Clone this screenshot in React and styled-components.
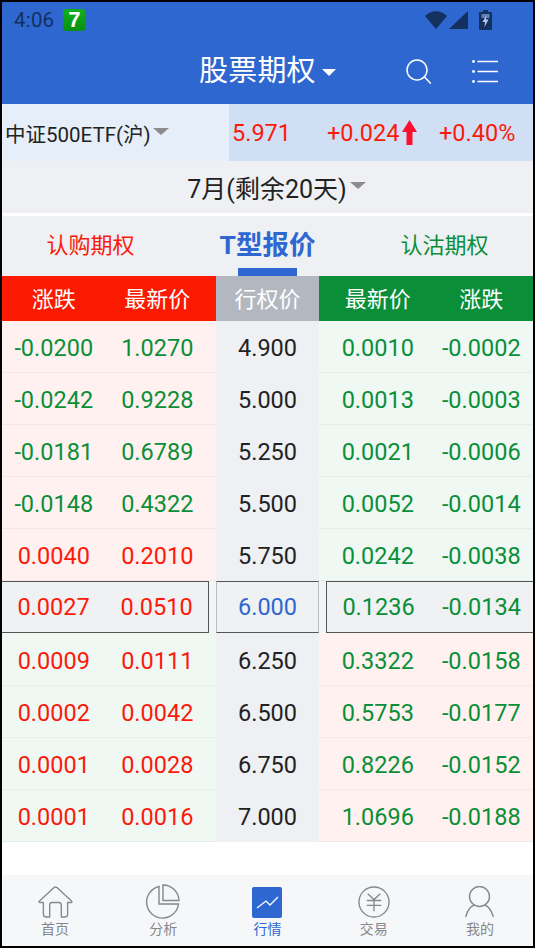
import React from 'react';
import styled, { createGlobalStyle } from 'styled-components';

const Global = createGlobalStyle`
  html, body { margin: 0; padding: 0; background: #000; }
  * { box-sizing: border-box; }
  body { font-family: Roboto, "Noto Sans CJK SC", sans-serif; }
`;
const RED = '#fb1a0a';
const GREEN = '#0a8f38';
const BLUE = '#2e67d0';

const Frame = styled.div`
  width: 535px; height: 948px; padding: 2px; background: #000;
`;
const Screen = styled.div`
  width: 531px; height: 944px; background: #fff; display: flex; flex-direction: column; overflow: hidden;
`;
const Top = styled.div`
  height: 102px; background: ${BLUE}; display: flex; flex-direction: column; flex: none;
`;
const Status = styled.div`
  height: 36px; display: flex; align-items: center; padding: 0 41px 0 12px; color: #14305f; font-size: 20.5px;
`;
const Time = styled.span`
  letter-spacing: 0.2px;
`;
const Badge = styled.div`
  width: 22px; height: 22px; margin-left: 9px; border-radius: 3px; background: linear-gradient(#12b01c, #078f10); color: #fff;
  font: 900 22px/22px "Liberation Sans", sans-serif; text-align: center;
`;
const StatusIcons = styled.div`
  margin-left: auto; display: flex; align-items: center; gap: 2px;
`;
const Title = styled.div`
  flex: 1; display: flex; align-items: center; padding-left: 197px; color: #fff;
`;
const TitleText = styled.span`
  font-size: 29px; line-height: 40px; font-weight: 400; letter-spacing: 0.2px;
`;
const Caret = styled.i`
  display: block; flex: none; width: 0; height: 0;
  border-left: ${p => p.$s}px solid transparent; border-right: ${p => p.$s}px solid transparent;
  border-top: ${p => p.$h}px solid ${p => p.$c};
  margin-left: ${p => p.$m}px; margin-top: ${p => p.$t || 0}px;
`;
const HeaderIcons = styled.div`
  margin-left: auto; display: flex; align-items: center; gap: 41px; padding-right: 35px;
`;
const Info = styled.div`
  height: 57px; display: flex; flex: none; background: #d0dff3; font-size: 23.5px;
`;
const Under = styled.div`
  width: 227px; background: #e6eefa; display: flex; align-items: center; padding-left: 3px; color: #222;
  font-size: 20.5px;
`;
const Quote = styled.div`
  flex: 1; display: flex; align-items: center; color: ${RED}; padding: 1px 0 0 3px; position: relative;
`;
const QuoteVal = styled.span`
  width: ${p => p.$w}px; flex: none;
`;
const Month = styled.div`
  height: 52px; background: #eef0f3; display: flex; align-items: center; justify-content: center; flex: none;
  font-size: 25px; color: #222; padding-left: 18px; padding-bottom: 1px;
`;
const Tabs = styled.div`
  margin-top: 3px; height: 60px; background: #eef0f3; display: grid; grid-template-columns: 177px 177px 177px; flex: none;
`;
const Tab = styled.div`
  display: flex; align-items: center; justify-content: center; position: relative; padding-bottom: 7px;
  color: ${p => p.$c}; font-size: ${p => p.$active ? 26.5 : 22}px; font-weight: ${p => p.$active ? 700 : 400};
`;
const Underline = styled.i`
  position: absolute; left: 59px; bottom: 0; width: 59px; height: 8px; background: ${BLUE};
`;
const Grid = styled.div`
  display: grid; grid-template-columns: 103.5px 110.5px 103px 110.5px 103.5px; flex: none; background: #f3f4f6;
`;
const Head = styled.div`
  height: 45px; background: ${p => p.$bg}; color: #fff; display: flex; align-items: center; justify-content: center;
  font-size: 22px; padding: 0 ${p => p.$pr || 0}px 3px ${p => p.$pl || 0}px;
`;
const Cell = styled.div`
  height: 52.1px; display: flex; align-items: center; justify-content: center; font-size: 23.5px;
  background: ${p => p.$bg}; color: ${p => p.$c};
  padding: 3px ${p => p.$pr || 0}px 0 ${p => p.$pl || 0}px;
  border-bottom: 1px solid ${p => p.$mid ? 'transparent' : 'rgba(0,0,0,0.04)'};
`;
const Sel = styled.div`
  height: 52px; grid-column: ${p => p.$col}; display: grid; grid-template-columns: ${p => p.$cols};
  background: #eff1f3; align-items: center; justify-items: center; font-size: 23.5px; color: ${p => p.$c};
  margin: 0 ${p => p.$mr || 0}px 0 ${p => p.$ml || 0}px;
  border-top: 1px solid #555; border-bottom: 1px solid #555;
  border-left: ${p => p.$l ? `1px solid ${p.$side}` : 'none'}; border-right: ${p => p.$r ? `1px solid ${p.$side}` : 'none'};
`;
const Spacer = styled.div`
  flex: 1; background: #fff;
`;
const Nav = styled.div`
  height: 71px; background: #f6f7f9; display: grid; grid-template-columns: repeat(5, 1fr); flex: none;
`;
const NavItem = styled.div`
  display: flex; flex-direction: column; align-items: center; padding: 10px 0 0 ${p => p.$pl || 0}px;
  color: ${p => p.$c}; font-size: 14px; line-height: 16px;
`;
const NavIcon = styled.div`
  height: 34px; display: flex; align-items: center; justify-content: center; margin-bottom: 2px;
`;

const PINK = '#fff1ef';
const MINT = '#f0f8f4';
const MID = '#eef0f3';

const rows = [
  ['-0.0200','1.0270','4.900','0.0010','-0.0002',GREEN,GREEN,PINK,MINT],
  ['-0.0242','0.9228','5.000','0.0013','-0.0003',GREEN,GREEN,PINK,MINT],
  ['-0.0181','0.6789','5.250','0.0021','-0.0006',GREEN,GREEN,PINK,MINT],
  ['-0.0148','0.4322','5.500','0.0052','-0.0014',GREEN,GREEN,PINK,MINT],
  ['0.0040','0.2010','5.750','0.0242','-0.0038',RED,GREEN,PINK,MINT],
  null,
  ['0.0009','0.0111','6.250','0.3322','-0.0158',RED,GREEN,MINT,PINK],
  ['0.0002','0.0042','6.500','0.5753','-0.0177',RED,GREEN,MINT,PINK],
  ['0.0001','0.0028','6.750','0.8226','-0.0152',RED,GREEN,MINT,PINK],
  ['0.0001','0.0016','7.000','1.0696','-0.0188',RED,GREEN,MINT,PINK],
];

const Wifi = () => (
  <svg width="22" height="20" viewBox="0 0 22 20"><path d="M0 6 C6 -0.5 16 -0.5 22 6 L11 19 Z" fill="#14305f"/></svg>
);
const Signal = () => (
  <svg width="19" height="20" viewBox="0 0 19 20"><path d="M19 1 V19 H0 Z" fill="#14305f"/></svg>
);
const Battery = () => (
  <svg width="13" height="20" viewBox="0 0 13 20" style={{marginLeft: 9}}>
    <path d="M4 0 H9 V2 H12 Q13 2 13 3 V19 Q13 20 12 20 H1 Q0 20 0 19 V3 Q0 2 1 2 H4 Z" fill="#14305f"/>
    <path d="M2.5 4 H10.5 V8 H2.5 Z" fill="#5d7fb8"/>
    <path d="M7.5 5 L3.5 12 H6 L5.5 17 L9.5 9.5 H7 Z" fill="#b5c9ee"/>
  </svg>
);
const Search = () => (
  <svg width="25" height="25" viewBox="0 0 25 25" fill="none" stroke="#fff" strokeWidth="1.5" strokeLinecap="round">
    <circle cx="11" cy="11" r="10"/><path d="M18.5 18 L24.5 24.3"/>
  </svg>
);
const ListIcon = () => (
  <svg width="26" height="23" viewBox="0 0 26 23" fill="none" stroke="#fff" strokeWidth="1.5">
    <path d="M5.5 1.5 H26 M5.5 11.5 H26 M5.5 21.5 H26"/>
    <circle cx="1.5" cy="1.5" r="1.4" fill="#fff" stroke="none"/>
    <circle cx="1.5" cy="11.5" r="1.4" fill="#fff" stroke="none"/>
    <circle cx="1.5" cy="21.5" r="1.4" fill="#fff" stroke="none"/>
  </svg>
);
const UpArrow = () => (
  <svg width="15" height="25" viewBox="0 0 15 25" style={{position:'absolute', left: 173, top: 16}}>
    <path d="M7.5 0 L15 12 H10.5 V25 H4.5 V12 H0 Z" fill="#fb1030"/>
  </svg>
);
const GR = '#85878c';
const Home = () => (
  <svg width="35" height="32" viewBox="0 0 36 33" fill="none" stroke={GR} strokeWidth="1.4" strokeLinejoin="round">
    <path d="M1 16 L16.5 1.5 Q18 0.5 19.5 1.5 L35 16 Q35 17.5 33 17 H30.5 V29 Q30.5 32 28 32 H24 V20 Q24 17 21.5 17 H14.5 Q12 17 12 20 V32 H8 Q5.5 32 5.5 29 V17 H3 Q1 17.5 1 16 Z"/>
  </svg>
);
const Pie = () => (
  <svg width="36" height="36" viewBox="0 0 36 36" fill="none" stroke={GR} strokeWidth="1.4">
    <path d="M14 2.5 A16 16 0 1 0 33.5 20 H14 Z" />
    <path d="M18 1 A16 16 0 0 1 34 16.5 H18 Z" />
  </svg>
);
const Chart = () => (
  <svg width="30" height="31" viewBox="0 0 30 31">
    <rect width="30" height="31" rx="2" fill={BLUE}/>
    <path d="M5 21 L14 14 L18 18 L26 10" fill="none" stroke="#fff" strokeWidth="1.3"/>
  </svg>
);
const Yen = () => (
  <svg width="32" height="32" viewBox="0 0 33 33" fill="none" stroke={GR} strokeWidth="1.4">
    <circle cx="16.5" cy="16.5" r="15.5"/>
    <path d="M10 8 L16.5 14 L23 8 M16.5 14 V26 M9 15 H24 M9 20 H24"/>
  </svg>
);
const User = () => (
  <svg width="29" height="32" viewBox="0 0 29 32" fill="none" stroke={GR} strokeWidth="1.4">
    <circle cx="14.5" cy="10.5" r="10"/>
    <path d="M0.7 31 C2.5 24 6 20 9.5 19 M28.3 31 C26.5 24 23 20 19.5 19"/>
  </svg>
);

const Row = ({ r }) => (
  <>
    <Cell $bg={r[7]} $c={r[5]}>{r[0]}</Cell>
    <Cell $bg={r[7]} $c={r[5]} $pr={7}>{r[1]}</Cell>
    <Cell $bg={MID} $c="#222" $mid>{r[2]}</Cell>
    <Cell $bg={r[8]} $c={r[6]} $pl={7}>{r[3]}</Cell>
    <Cell $bg={r[8]} $c={r[6]}>{r[4]}</Cell>
  </>
);

export default function App() {
  return (
    <Frame>
      <Global />
      <Screen>
        <Top>
          <Status>
            <Time>4:06</Time>
            <Badge>7</Badge>
            <StatusIcons><Wifi /><Signal /><Battery /></StatusIcons>
          </Status>
          <Title>
            <TitleText>股票期权</TitleText>
            <Caret $s={7} $h={7} $c="#fff" $m={6} $t={2} />
            <HeaderIcons><Search /><ListIcon /></HeaderIcons>
          </Title>
        </Top>
        <Info>
          <Under>中证500ETF(沪)<Caret $s={8} $h={7} $c="#8b8b90" $m={2} $t={-2} /></Under>
          <Quote>
            <QuoteVal $w={95}>5.971</QuoteVal>
            <QuoteVal $w={112}>+0.024</QuoteVal>
            <span>+0.40%</span>
            <UpArrow />
          </Quote>
        </Info>
        <Month>7月(剩余20天)<Caret $s={8} $h={7} $c="#8b8b90" $m={3} $t={-2} /></Month>
        <Tabs>
          <Tab $c={RED}>认购期权</Tab>
          <Tab $c={BLUE} $active>T型报价<Underline /></Tab>
          <Tab $c={GREEN}>认沽期权</Tab>
        </Tabs>
        <Grid>
          <Head $bg="#fb1a00">涨跌</Head>
          <Head $bg="#fb1a00" $pr={7}>最新价</Head>
          <Head $bg="#b3b8c0">行权价</Head>
          <Head $bg={GREEN} $pl={7}>最新价</Head>
          <Head $bg={GREEN}>涨跌</Head>
          {rows.map((r, i) => r ? <Row key={i} r={r} /> : (
            <React.Fragment key={i}>
              <Sel $col="1 / 3" $cols="1fr 1fr" $c={RED} $side="#555" $r $mr={7}><span>0.0027</span><span>0.0510</span></Sel>
              <Sel $col="3" $cols="1fr" $c={BLUE} $side="#b9bcc1" $l $r><span>6.000</span></Sel>
              <Sel $col="4 / 6" $cols="1fr 1fr" $c={GREEN} $side="#555" $l $ml={7}><span>0.1236</span><span>-0.0134</span></Sel>
            </React.Fragment>
          ))}
        </Grid>
        <Spacer />
        <Nav>
          <NavItem $c={GR}><NavIcon><Home /></NavIcon>首页</NavItem>
          <NavItem $c={GR} $pl={4}><NavIcon><Pie /></NavIcon>分析</NavItem>
          <NavItem $c={BLUE}><NavIcon><Chart /></NavIcon>行情</NavItem>
          <NavItem $c={GR}><NavIcon><Yen /></NavIcon>交易</NavItem>
          <NavItem $c={GR}><NavIcon><User /></NavIcon>我的</NavItem>
        </Nav>
      </Screen>
    </Frame>
  );
}
